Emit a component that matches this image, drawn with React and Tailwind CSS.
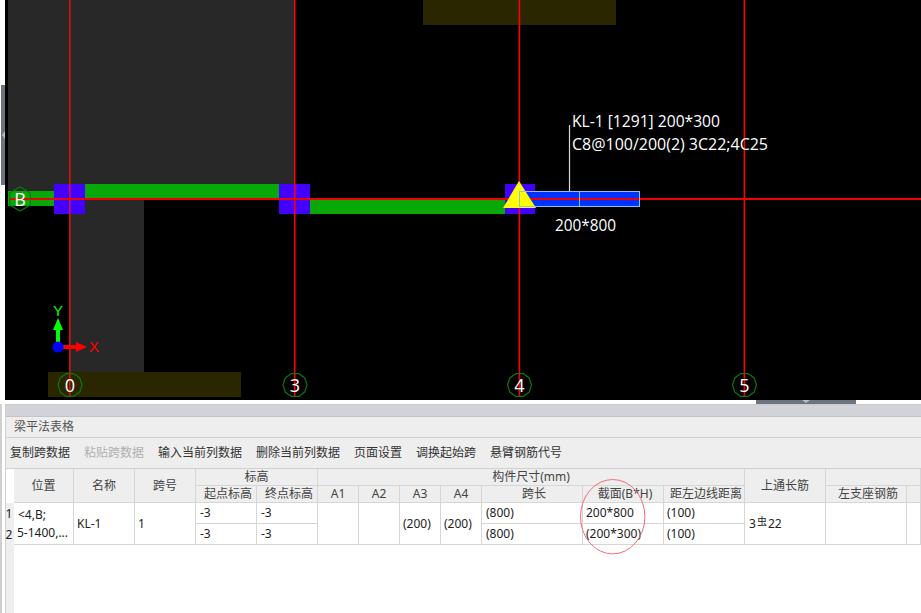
import React from "react";

const FONT = '"Noto Sans", "Noto Sans CJK SC", sans-serif';

function Bubble({ x, y, label, sides = 10, rot = 0, fs = 18 }) {
  const pts = [];
  for (let i = 0; i < sides; i++) {
    const a = ((i * 360) / sides + rot) * (Math.PI / 180);
    pts.push(`${(x + 12 * Math.cos(a)).toFixed(1)},${(y + 12 * Math.sin(a)).toFixed(1)}`);
  }
  return (
    <g>
      <polygon points={pts.join(" ")} fill="none" stroke="#0a7a0a" strokeWidth="1.2" />
      <text x={x} y={y + 6.5} textAnchor="middle" fontSize={fs} fill="#ffffff" fontFamily='"Open Sans", sans-serif'>
        {label}
      </text>
    </g>
  );
}

function CadView() {
  return (
    <svg viewBox="5 0 916 400" width="916" height="400" className="block">
      <rect x="5" y="0" width="916" height="400" fill="#000000" />
      {/* dark slabs */}
      <rect x="8" y="0" width="286" height="191" fill="#282828" />
      <rect x="70" y="191" width="74" height="181" fill="#282828" />
      {/* olive blocks */}
      <rect x="423" y="0" width="193" height="25" fill="#2a2600" />
      <rect x="48" y="372" width="193" height="25" fill="#2a2600" />
      {/* beams */}
      <rect x="8" y="191" width="46" height="15" fill="#08a808" />
      <rect x="85" y="184" width="194" height="15" fill="#08a808" />
      <rect x="310" y="199" width="196" height="15" fill="#08a808" />
      {/* columns */}
      <rect x="54" y="184" width="31" height="30" fill="#4400ff" />
      <rect x="279" y="184" width="31" height="30" fill="#4400ff" />
      <rect x="505" y="184" width="30" height="30" fill="#4400ff" />
      {/* selected beam */}
      <rect x="519.5" y="191.5" width="120" height="15" fill="#0033ff" />
      <line x1="569.5" y1="125" x2="569.5" y2="191" stroke="#d8d8d8" strokeWidth="1.2" />
      {/* axis lines */}
      <line x1="69.8" y1="0" x2="69.8" y2="396" stroke="#f01010" strokeWidth="1.4" />
      <line x1="294.7" y1="0" x2="294.7" y2="396" stroke="#ff0000" strokeWidth="1.6" />
      <line x1="519.4" y1="0" x2="519.4" y2="396" stroke="#ff0000" strokeWidth="1.6" />
      <line x1="744.4" y1="0" x2="744.4" y2="396" stroke="#ff0000" strokeWidth="1.6" />
      <line x1="9" y1="199" x2="921" y2="199" stroke="#f00000" strokeWidth="1.8" />
      {/* yellow marker, with the selected beam's outline over it */}
      <polygon points="519,181 536,208 503,208" fill="#ffff00" />
      <rect x="519.5" y="191.5" width="120" height="15" fill="none" stroke="#8fc0f5" strokeWidth="1" />
      <line x1="579.5" y1="191" x2="579.5" y2="206" stroke="#8fc0f5" strokeWidth="1" />
      {/* bubbles */}
      <Bubble x={20} y={199} label="B" sides={6} rot={30} />
      <Bubble x={70} y={385} label="0" />
      <Bubble x={295} y={385} label="3" />
      <Bubble x={519.5} y={385} label="4" />
      <Bubble x={744.5} y={385} label="5" />
      {/* labels */}
      <g fontFamily='"Open Sans", sans-serif' fontSize="16" fill="#ffffff">
        <text x="572" y="127" textLength="148" lengthAdjust="spacingAndGlyphs">KL-1 [1291] 200*300</text>
        <text x="572" y="150" textLength="196" lengthAdjust="spacingAndGlyphs">C8@100/200(2) 3C22;4C25</text>
        <text x="555" y="231" textLength="61" lengthAdjust="spacingAndGlyphs">200*800</text>
      </g>
      {/* UCS */}
      <rect x="56" y="329" width="4" height="14" fill="#00ff00" />
      <polygon points="58,318 63,330 53,330" fill="#00ff00" />
      <rect x="60" y="345" width="18" height="4" fill="#ff0000" />
      <polygon points="87,347 76,342 76,352" fill="#ff0000" />
      <circle cx="58" cy="347" r="5.5" fill="#0000ff" />
      <text x="58" y="316" textAnchor="middle" fontSize="15" fill="#00ff00" fontFamily='"Liberation Sans", sans-serif'>Y</text>
      <text x="94" y="352" textAnchor="middle" fontSize="15" fill="#ff0000" fontFamily='"Liberation Sans", sans-serif'>X</text>
    </svg>
  );
}

const H = "box-border border-r border-b border-[#d6d6d6] bg-[#eeeeee] flex items-center justify-center text-[#444444] whitespace-nowrap overflow-hidden";
const HS = `${H} pl-1`;
const C = "box-border border-r border-b border-[#d6d6d6] bg-white flex items-center px-[3px] text-[#222222] whitespace-nowrap overflow-hidden";

function BeamTable() {
  return (
    <div className="grid grid-cols-[8px_60px_61px_61px_61px_61px_41px_41px_41px_41px_101px_81px_81px_81px_81px_1fr] grid-rows-[17px_17px_21px_21px] text-[12px]">
      <div className="row-span-2 bg-white" />
      <div className={`${H} row-span-2`}>位置</div>
      <div className={`${H} row-span-2`}>名称</div>
      <div className={`${H} row-span-2`}>跨号</div>
      <div className={`${H} col-span-2`}>标高</div>
      <div className={`${H} col-span-7`}>构件尺寸(mm)</div>
      <div className={`${H} row-span-2`}>上通长筋</div>
      <div className={`${H} col-span-2`} />

      <div className={HS}>起点标高</div>
      <div className={HS}>终点标高</div>
      <div className={H}>A1</div>
      <div className={H}>A2</div>
      <div className={H}>A3</div>
      <div className={H}>A4</div>
      <div className={HS}>跨长</div>
      <div className={HS}>截面(B*H)</div>
      <div className={HS}>距左边线距离</div>
      <div className={HS}>左支座钢筋</div>
      <div className={H} />

      <div className="bg-[#eeeeee] flex items-center justify-center pr-[2px] text-[#222222]">1</div>
      <div className={`${C} row-span-2 flex-col !items-start justify-center leading-[18px]`}>
        <span className="pl-px">&lt;4,B;</span>
        <span>5-1400,...</span>
      </div>
      <div className={`${C} row-span-2`}>KL-1</div>
      <div className={`${C} row-span-2`}>1</div>
      <div className={`${C} pl-1`}>-3</div>
      <div className={`${C} pl-1`}>-3</div>
      <div className={`${C} row-span-2`} />
      <div className={`${C} row-span-2`} />
      <div className={`${C} row-span-2`}>(200)</div>
      <div className={`${C} row-span-2`}>(200)</div>
      <div className={`${C} pl-1`}>(800)</div>
      <div className={C}>200*800</div>
      <div className={C}>(100)</div>
      <div className={`${C} row-span-2 pl-1`}>
        3<span className="text-[10px] mx-px -mt-1">虫</span>22
      </div>
      <div className={`${C} row-span-2`} />
      <div className={`${C} row-span-2`} />

      <div className="bg-[#eeeeee] flex items-center justify-center pr-[2px] text-[#222222]">2</div>
      <div className={`${C} pl-1`}>-3</div>
      <div className={`${C} pl-1`}>-3</div>
      <div className={`${C} pl-1`}>(800)</div>
      <div className={C}>(200*300)</div>
      <div className={C}>(100)</div>
    </div>
  );
}

export default function App() {
  return (
    <div className="relative w-[921px] h-[613px] overflow-hidden bg-white flex flex-col text-[12px]" style={{ fontFamily: FONT }}>
      {/* top: drawing area */}
      <div className="flex h-[400px] shrink-0">
        <div className="w-[5px] flex flex-col pt-[85px] pl-px">
          <div className="h-[100px] w-[4px] bg-[#6c757f] flex items-center justify-end">
            <span className="block w-0 h-0 border-y-[4px] border-y-transparent border-r-[3px] border-r-[#b9bec4]" />
          </div>
        </div>
        <CadView />
      </div>

      {/* splitter */}
      <div className="h-[4px] shrink-0 flex justify-start pl-[756px]">
        <div className="w-[100px] h-[4px] bg-[#6c757f] flex justify-center">
          <span className="block w-0 h-0 border-x-[4px] border-x-transparent border-t-[3px] border-t-[#b9bec4]" />
        </div>
      </div>

      {/* lower panel */}
      <div className="flex flex-1 min-h-0">
        <div className="w-[5px] shrink-0 border-l-2 border-l-[#d0d0d0] box-border bg-white" />
        <div className="flex-1 min-w-0 flex flex-col border-l border-l-[#d0d0d0] border-t border-t-[#c8c8c8]">
          <div className="h-[11px] shrink-0 bg-[#d2d3d8] border-b border-b-[#c4c4c4] box-content" />
          <div className="h-[21px] shrink-0 bg-[#eeeeee] border-b border-b-[#d0d0d0] flex items-center pl-2 text-[#555555]">
            梁平法表格
          </div>
          <div className="h-[31px] shrink-0 bg-[#eeeeee] border-b border-b-[#d0d0d0] flex items-center gap-[14px] pl-1 text-[#333333]">
            <span>复制跨数据</span>
            <span className="text-[#b0b0b0]">粘贴跨数据</span>
            <span>输入当前列数据</span>
            <span>删除当前列数据</span>
            <span>页面设置</span>
            <span>调换起始跨</span>
            <span>悬臂钢筋代号</span>
          </div>
          <BeamTable />
          <div className="flex-1 w-[8px] bg-[#eeeeee]" />
        </div>
      </div>

      {/* hand-drawn annotation */}
      <svg className="absolute left-[579px] top-[478px]" width="68" height="78" viewBox="579 478 68 78">
        <ellipse cx="612.7" cy="516.7" rx="32.2" ry="37.2" fill="none" stroke="#f26d78" strokeWidth="1" />
      </svg>
    </div>
  );
}
